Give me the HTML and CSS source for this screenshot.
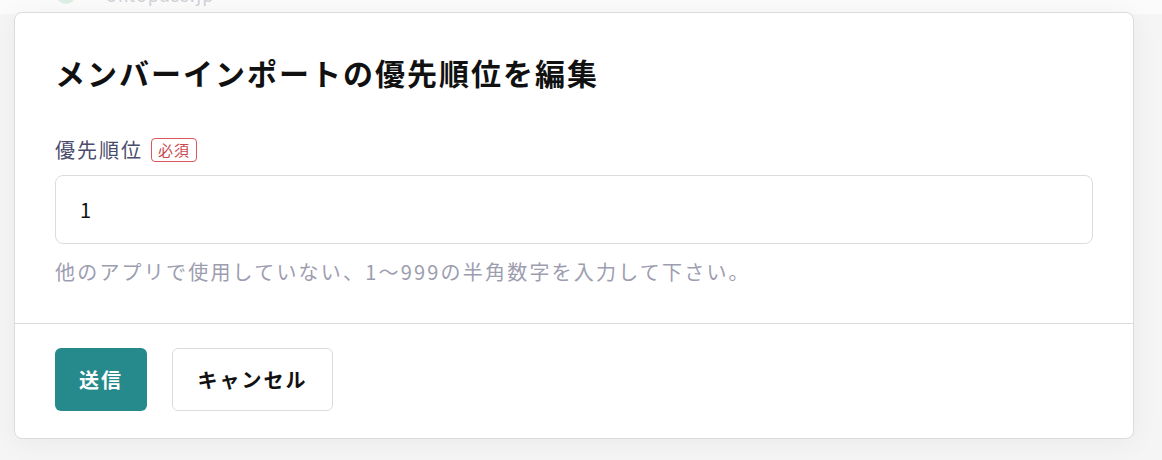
FILE: index.html
```html
<!DOCTYPE html>
<html lang="ja">
<head>
  <meta charset="UTF-8" />
  <meta name="viewport" content="width=device-width, initial-scale=1.0"/>
  <title>メンバーインポートの優先順位を編集</title>
  <link rel="stylesheet" href="styles.css">
</head>
<body>
  <div class="backdrop">
    <div class="site">
      <span class="site-dot"></span>
      <span class="site-name">oktopass.jp</span>
    </div>
  </div>

  <div class="modal">
    <div class="modal-body">
      <h2 class="modal-title">メンバーインポートの優先順位を編集</h2>

      <label class="field-label" for="priority">優先順位 <span class="required">必須</span></label>
      <input type="text" id="priority" class="field-input" value="1" />
      <p class="field-help">他のアプリで使用していない、1〜999の半角数字を入力して下さい。</p>
    </div>

    <div class="modal-footer">
      <button class="btn btn-primary">送信</button>
      <button class="btn btn-default">キャンセル</button>
    </div>
  </div>
</body>
</html>
```

FILE: styles.css
```css
body {
  margin: 0;
  font-family: "Noto Sans CJK JP", "Noto Sans", sans-serif;
  background: #f5f5f5;
  color: #111;
  height: 460px;
  overflow: hidden;
}
.backdrop {
  height: 33px;
  background: #fbfbfb;
}
.site {
  display: flex;
  align-items: center;
  gap: 30px;
  padding-left: 56px;
  margin-top: -19px;
}
.site-dot {
  width: 20px;
  height: 20px;
  border-radius: 50%;
  background: #dcefe4;
}
.site-name {
  font-size: 18px;
  color: #d2d2d8;
  letter-spacing: 1px;
}
.modal {
  position: absolute;
  top: 12px;
  left: 14px;
  width: 1118px;
  background: #fff;
  border: 1px solid #dcdcdc;
  border-radius: 8px;
  box-shadow: 0 4px 28px rgba(0, 0, 0, 0.05);
}
.modal-body {
  padding: 37px 40px 36px;
}
.modal-title {
  margin: 0 0 40px;
  font-size: 30px;
  line-height: 45px;
  font-weight: 700;
  letter-spacing: 2px;
}
.field-label {
  display: flex;
  align-items: center;
  gap: 8px;
  font-size: 20px;
  line-height: 30px;
  letter-spacing: 2px;
  color: #4a4c6b;
}
.required {
  font-size: 15px;
  line-height: 22px;
  padding: 0 6px;
  letter-spacing: 1px;
  color: #c94a4f;
  border: 1px solid #d9575c;
  border-radius: 4px;
}
.field-input {
  display: block;
  box-sizing: border-box;
  width: 100%;
  height: 69px;
  margin-top: 10px;
  padding: 0 24px;
  font-family: inherit;
  font-size: 20px;
  color: #111;
  border: 1px solid #dcdcdc;
  border-radius: 8px;
  outline: none;
}
.field-help {
  margin: 13px 0 0;
  font-size: 20px;
  line-height: 30px;
  letter-spacing: 2.2px;
  color: #9d9db0;
}
.modal-footer {
  display: flex;
  gap: 25px;
  padding: 24px 40px 27px;
  border-top: 1px solid #dcdcdc;
}
.btn {
  height: 63px;
  padding: 0 24px;
  font-family: inherit;
  font-size: 20px;
  font-weight: 700;
  letter-spacing: 2px;
  border-radius: 6px;
  cursor: pointer;
}
.btn-primary {
  background: #268a8c;
  color: #fff;
  border: none;
  width: 92px;
}
.btn-default {
  background: #fff;
  color: #111;
  border: 1px solid #dcdcdc;
  width: 161px;
}
```
